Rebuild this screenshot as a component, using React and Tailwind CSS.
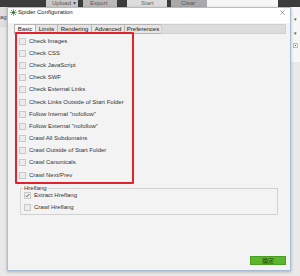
const basicOptions = [
  "Check Images",
  "Check CSS",
  "Check JavaScript",
  "Check SWF",
  "Check External Links",
  "Check Links Outside of Start Folder",
  'Follow Internal "nofollow"',
  'Follow External "nofollow"',
  "Crawl All Subdomains",
  "Crawl Outside of Start Folder",
  "Crawl Canonicals",
  "Crawl Next/Prev",
];

const tabs = [
  { name: "Basic", w: "w-[21px]", active: true },
  { name: "Limits", w: "w-[22px]" },
  { name: "Rendering", w: "w-[34px]" },
  { name: "Advanced", w: "w-[33px]" },
  { name: "Preferences", w: "w-[37px]" },
];

const Box = ({ checked }) => (
  <span className="w-[7px] h-[7px] border border-[#c9c9c9] bg-[#ececec] flex items-center justify-center shrink-0">
    {checked && (
      <svg viewBox="0 0 8 8" className="w-[7px] h-[7px]">
        <path d="M1.2 4.2 L3 6 L6.8 1.6" fill="none" stroke="#333" strokeWidth="1.1" />
      </svg>
    )}
  </span>
);

const SpiderIcon = () => (
  <svg viewBox="0 0 10 10" className="w-[7px] h-[7px]">
    <circle cx="5" cy="5" r="2.2" fill="#2f7a2b" />
    <path d="M5 0.5v2M5 7.5v2M0.5 5h2M7.5 5h2M1.8 1.8l1.5 1.5M6.7 6.7l1.5 1.5M8.2 1.8L6.7 3.3M3.3 6.7L1.8 8.2" stroke="#3d8c35" strokeWidth="1.3" />
  </svg>
);

export default function App() {
  return (
    <div
      className="relative w-[300px] h-[276px] overflow-hidden bg-[#e9e9e9] text-[#333]"
      style={{ fontFamily: '"Liberation Sans", Arial, sans-serif' }}
    >
      {/* background app */}
      <div className="flex h-[7px] bg-[#3c3c3c] text-[6px] leading-[7px]">
        <div className="w-[46px]" />
        <div className="w-[32px] bg-[#c8c8c8] text-[#555] pl-[6px]">Upload ▾</div>
        <div className="w-[5px]" />
        <div className="w-[34px] bg-[#b9b9b9] text-[#555] pl-[7px]">Export</div>
        <div className="w-[10px]" />
        <div className="w-[40px] bg-[#dcdcdc] text-[#666] pl-[14px]">Start</div>
        <div className="w-[4px]" />
        <div className="w-[36px] bg-[#a9a9a9] text-[#555] pl-[10px]">Clear</div>
        <div className="w-[71px] bg-[#f6f6f6]" />
      </div>
      <div className="flex justify-between">
        <div className="w-[7px] text-[6px] leading-[9px] pt-[6px] text-[#444] bg-[#dedede] h-[20px]">ag</div>
        <div className="w-[9px] flex flex-col items-center gap-[6px] pt-[9px] text-[5px] text-[#555] bg-[#f7f7f7] h-[55px]">
          <span>▾</span>
          <span>▾</span>
          <span className="w-[5px] h-[5px] border border-[#bbb] flex items-center justify-center">
            <span className="w-[1px] h-[1px] bg-[#555]" />
          </span>
        </div>
      </div>

      {/* dialog */}
      <div className="absolute left-[7px] top-[7px] w-[284px] h-[264px] border border-[#a7bed6] bg-[#f3f3f3] shadow-[0_1px_3px_rgba(0,0,0,0.25)] flex flex-col">
        <div className="h-[15px] bg-white flex items-start pt-[1px] pl-[2px] pr-[5px] gap-[1px] text-[6px] text-[#222]">
          <SpiderIcon />
          <span className="flex-1 leading-[7px]">Spider Configuration</span>
          <svg viewBox="0 0 6 6" className="w-[5px] h-[5px] mt-[1px]">
            <path d="M0.5 0.5L5.5 5.5M5.5 0.5L0.5 5.5" stroke="#777" strokeWidth="0.8" />
          </svg>
        </div>

        <div className="flex mt-[1px] ml-[6px] mr-[4px] h-[10px] text-[6px] leading-[9px] text-[#222]">
          {tabs.map((t) => (
            <div
              key={t.name}
              className={`${t.w} border border-r-0 border-[#b4b4b4] text-center ${
                t.active ? "bg-[#f7f7f7]" : "bg-[#e4e4e4]"
              }`}
            >
              {t.name}
            </div>
          ))}
          <div className="flex-1 border border-[#cfcfcf] bg-[#dcdcdc]" />
        </div>

        <div className="flex flex-col pl-[11px] pt-[1px] text-[6px] text-[#333]">
          {basicOptions.map((o) => (
            <div key={o} className="h-[12.2px] flex items-center gap-[3px]">
              <Box />
              <span>{o}</span>
            </div>
          ))}
        </div>

        <div className="relative mt-[6.5px] ml-[12px] mr-[12px] h-[27px] border border-[#d2d2d2] pl-[3px] pt-[1px] text-[6px] text-[#333]">
          <span className="absolute left-[2px] top-[-4px] bg-[#f3f3f3] px-[1px] leading-[6px]">Hreflang</span>
          <div className="h-[12px] flex items-center gap-[3px]">
            <Box checked />
            <span>Extract Hreflang</span>
          </div>
          <div className="h-[12px] flex items-center gap-[3px]">
            <Box />
            <span>Crawl Hreflang</span>
          </div>
        </div>

        <div className="flex-1" />
        <div className="flex justify-end pr-[4px] pb-[5px]">
          <button
            className="w-[36px] h-[9px] bg-[#5db52e] border border-[#4aa020] text-[6px] leading-[7px] text-[#24480f]"
            style={{ fontFamily: '"Noto Sans CJK SC", sans-serif' }}
          >
            确定
          </button>
        </div>

        {/* red annotation box */}
        <div className="absolute left-[7px] top-[24px] w-[119px] h-[152px] border-2 border-[#e3232b] rounded-[1px]" />
      </div>
    </div>
  );
}
